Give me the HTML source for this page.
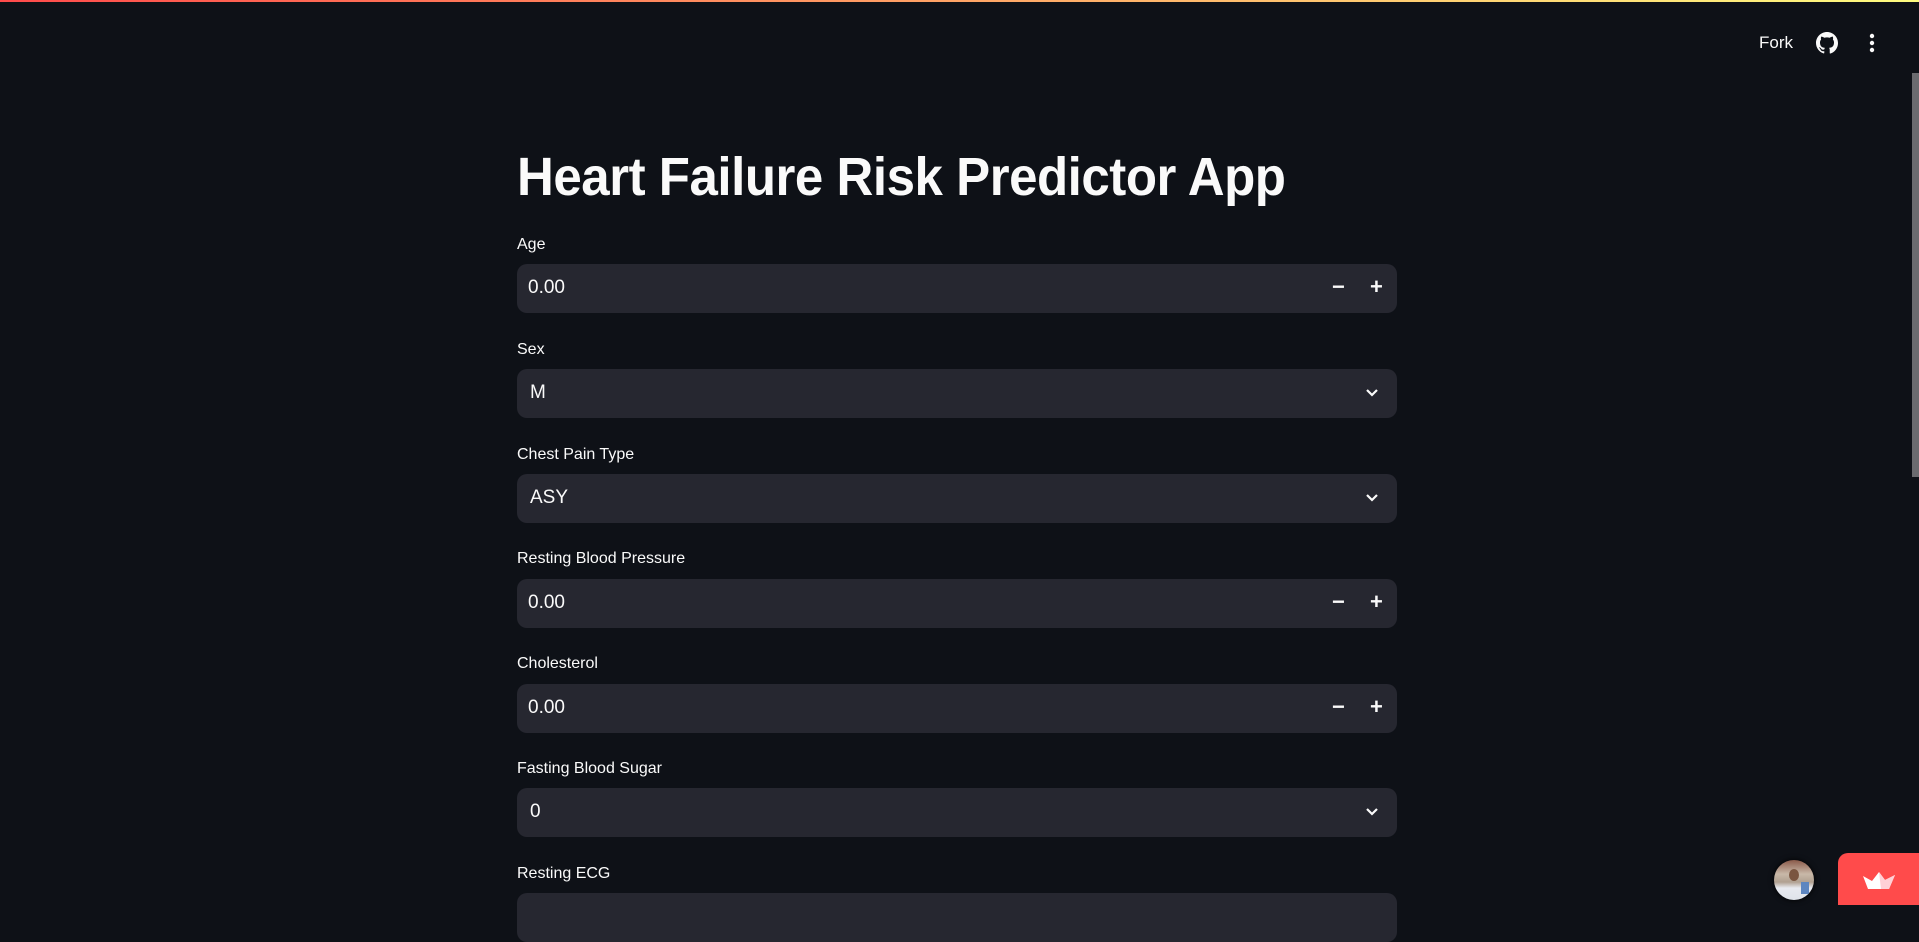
<!DOCTYPE html>
<html><head><meta charset="utf-8"><style>
*{box-sizing:border-box;margin:0;padding:0}
html,body{width:1919px;height:905px;overflow:hidden;background:#0e1117;font-family:"Liberation Sans",sans-serif;color:#fafafa}
.top{position:absolute;left:0;top:0;width:1919px;height:2px;background:linear-gradient(90deg,#ff4b4b,#fffd80)}
h1{position:absolute;left:517px;top:146px;font-size:54px;font-weight:bold;white-space:nowrap;transform:scaleX(0.945);transform-origin:left top;letter-spacing:-0.5px}
.lab{position:absolute;left:517px;font-size:16px;color:#fafafa}
.box{position:absolute;left:517px;width:880px;height:49px;background:#262730;border-radius:10px}
.val{position:absolute;left:11px;top:13px;font-size:19px}
.sel .val{left:13px}
.mp{position:absolute;top:10px;font-size:22px;font-weight:bold}
.chev{position:absolute;right:18px;top:17px}
</style></head><body>
<div class="top"></div>
<div style="position:absolute;left:1759px;top:33px;font-size:17px">Fork</div>
<svg style="position:absolute;left:1816px;top:32px" width="22" height="22" viewBox="0 0 16 16"><path fill="#fafafa" d="M8 0C3.580 0 0 3.58 0 8c0 3.54 2.29 6.53 5.47 7.59.4.07.55-.17.55-.38v-1.330c-2.23.48-2.7-1.07-2.7-1.07-.36-.92-.89-1.17-.89-1.17-.73-.5.05-.49.05-.49.8.06 1.23.83 1.23.83.71 1.22 1.87.87 2.33.66.07-.52.28-.87.5-1.070-1.78-.2-3.64-.89-3.64-3.95 0-.87.31-1.59.82-2.15-.08-.2-.36-1.02.08-2.12 0 0 .67-.21 2.2.82a7.6 7.6 0 014 0c1.53-1.04 2.2-.82 2.2-.82.44 1.1.16 1.920.08 2.12.51.56.82 1.27.82 2.15 0 3.07-1.87 3.75-3.65 3.95.29.25.54.73.54 1.48v2.2c0 .21.15.46.55.38A8 8 0 0016 8c0-4.42-3.58-8-8-8z"/></svg>
<svg style="position:absolute;left:1866px;top:33px" width="12" height="20"><circle cx="6" cy="3" r="2.2" fill="#fafafa"/><circle cx="6" cy="10" r="2.2" fill="#fafafa"/><circle cx="6" cy="17" r="2.2" fill="#fafafa"/></svg>
<div style="position:absolute;left:1912px;top:73px;width:7px;height:404px;background:#6b6b6f"></div>
<h1>Heart Failure Risk Predictor App</h1>

<div class="lab" style="top:236px">Age</div>
<div class="box" style="top:264px"><span class="val">0.00</span><span class="mp" style="left:815px">−</span><span class="mp" style="left:853px">+</span></div>
<div class="lab" style="top:341px">Sex</div>
<div class="box sel" style="top:369px"><span class="val">M</span><svg class="chev" width="14" height="14" viewBox="0 0 14 14"><path d="M2 4l5 5 5-5" stroke="#fafafa" stroke-width="2.2" fill="none"/></svg></div>
<div class="lab" style="top:446px">Chest Pain Type</div>
<div class="box sel" style="top:474px"><span class="val">ASY</span><svg class="chev" width="14" height="14" viewBox="0 0 14 14"><path d="M2 4l5 5 5-5" stroke="#fafafa" stroke-width="2.2" fill="none"/></svg></div>
<div class="lab" style="top:550px">Resting Blood Pressure</div>
<div class="box" style="top:579px"><span class="val">0.00</span><span class="mp" style="left:815px">−</span><span class="mp" style="left:853px">+</span></div>
<div class="lab" style="top:655px">Cholesterol</div>
<div class="box" style="top:684px"><span class="val">0.00</span><span class="mp" style="left:815px">−</span><span class="mp" style="left:853px">+</span></div>
<div class="lab" style="top:760px">Fasting Blood Sugar</div>
<div class="box sel" style="top:788px"><span class="val">0</span><svg class="chev" width="14" height="14" viewBox="0 0 14 14"><path d="M2 4l5 5 5-5" stroke="#fafafa" stroke-width="2.2" fill="none"/></svg></div>
<div class="lab" style="top:865px">Resting ECG</div>
<div class="box" style="top:893px"></div>

<div style="position:absolute;left:1774px;top:860px;width:40px;height:40px;border-radius:50%;overflow:hidden;background:linear-gradient(180deg,#8a5a4a 0%,#c8b8a8 35%,#b0a090 55%,#e8eaf0 70%,#dfe3ea 100%);box-shadow:0 0 6px #000">
<div style="position:absolute;left:15px;top:9px;width:10px;height:12px;border-radius:50%;background:#7a5540"></div>
<div style="position:absolute;left:27px;top:22px;width:8px;height:12px;background:#5d86c0"></div>
</div>
<div style="position:absolute;left:1838px;top:853px;width:81px;height:52px;background:#ff4b4b;border-radius:10px 0 0 0"></div>
<svg style="position:absolute;left:1862px;top:871px" width="34" height="20" viewBox="0 0 34 20"><path d="M1 5l9 5 7-9 6 8 10-5-6 14H6z" fill="#fff"/><path d="M17 1l6 8 10-5-6 14h-8z" fill="#ffd0d6"/></svg>
</body></html>
